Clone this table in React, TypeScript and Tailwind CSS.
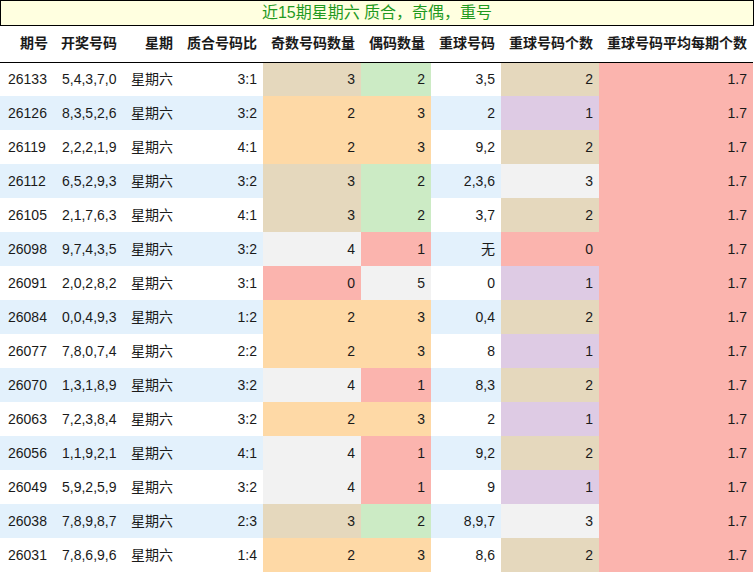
const rows: [string, string, string, string, string, string, string, string][] = [
  ["26133", "5,4,3,7,0", "3:1", "3", "2", "3,5", "2", "1.7"],
  ["26126", "8,3,5,2,6", "3:2", "2", "3", "2", "1", "1.7"],
  ["26119", "2,2,2,1,9", "4:1", "2", "3", "9,2", "2", "1.7"],
  ["26112", "6,5,2,9,3", "3:2", "3", "2", "2,3,6", "3", "1.7"],
  ["26105", "2,1,7,6,3", "4:1", "3", "2", "3,7", "2", "1.7"],
  ["26098", "9,7,4,3,5", "3:2", "4", "1", "无", "0", "1.7"],
  ["26091", "2,0,2,8,2", "3:1", "0", "5", "0", "1", "1.7"],
  ["26084", "0,0,4,9,3", "1:2", "2", "3", "0,4", "2", "1.7"],
  ["26077", "7,8,0,7,4", "2:2", "2", "3", "8", "1", "1.7"],
  ["26070", "1,3,1,8,9", "3:2", "4", "1", "8,3", "2", "1.7"],
  ["26063", "7,2,3,8,4", "3:2", "2", "3", "2", "1", "1.7"],
  ["26056", "1,1,9,2,1", "4:1", "4", "1", "9,2", "2", "1.7"],
  ["26049", "5,9,2,5,9", "3:2", "4", "1", "9", "1", "1.7"],
  ["26038", "7,8,9,8,7", "2:3", "3", "2", "8,9,7", "3", "1.7"],
  ["26031", "7,8,6,9,6", "1:4", "2", "3", "8,6", "2", "1.7"],
];

// pastel fills by value
const oddColor: Record<string, string> = {
  "0": "bg-[#fbb4ae]",
  "2": "bg-[#fed9a6]",
  "3": "bg-[#e5d8bd]",
  "4": "bg-[#f2f2f2]",
};
const evenColor: Record<string, string> = {
  "1": "bg-[#fbb4ae]",
  "2": "bg-[#ccebc5]",
  "3": "bg-[#fed9a6]",
  "5": "bg-[#f2f2f2]",
};
const repeatColor: Record<string, string> = {
  "0": "bg-[#fbb4ae]",
  "1": "bg-[#decbe4]",
  "2": "bg-[#e5d8bd]",
  "3": "bg-[#f2f2f2]",
};

const headers = [
  "期号",
  "开奖号码",
  "星期",
  "质合号码比",
  "奇数号码数量",
  "偶码数量",
  "重球号码",
  "重球号码个数",
  "重球号码平均每期个数",
];

export default function App() {
  return (
    <div
      className="w-[754px] bg-white text-[14px] text-[#1a1a1a]"
      style={{ fontFamily: '"Liberation Sans", "Noto Sans CJK SC", sans-serif' }}
    >
      <div className="h-[26px] border border-black bg-[#ffffe0] text-center text-[16px] leading-[24px] text-[#1f9a1f]">
        近15期星期六 质合，奇偶，重号
      </div>
      <table className="w-[753px] table-fixed border-collapse">
        <colgroup>
          <col className="w-[54px]" />
          <col className="w-[69px]" />
          <col className="w-[56px]" />
          <col className="w-[84px]" />
          <col className="w-[98px]" />
          <col className="w-[70px]" />
          <col className="w-[70px]" />
          <col className="w-[98px]" />
          <col className="w-[154px]" />
        </colgroup>
        <thead>
          <tr className="h-[36px] border-b border-black">
            {headers.map((h) => (
              <th key={h} className="whitespace-nowrap pr-[6px] text-right font-bold">
                {h}
              </th>
            ))}
          </tr>
        </thead>
        <tbody>
          {rows.map((r, i) => {
            const stripe = i % 2 === 1 ? "bg-[#e3f1fc]" : "bg-white";
            return (
              <tr key={r[0]} className="h-[34px]">
                <td className={`${stripe} pl-[8px]`}>{r[0]}</td>
                <td className={`${stripe} pl-[8px]`}>{r[1]}</td>
                <td className={`${stripe} pl-[8px]`}>星期六</td>
                <td className={`${stripe} pr-[6px] text-right`}>{r[2]}</td>
                <td className={`${oddColor[r[3]]} pr-[6px] text-right`}>{r[3]}</td>
                <td className={`${evenColor[r[4]]} pr-[6px] text-right`}>{r[4]}</td>
                <td className={`${stripe} pr-[6px] text-right`}>{r[5]}</td>
                <td className={`${repeatColor[r[6]]} pr-[6px] text-right`}>{r[6]}</td>
                <td className="bg-[#fbb4ae] pr-[6px] text-right">{r[7]}</td>
              </tr>
            );
          })}
        </tbody>
      </table>
    </div>
  );
}
